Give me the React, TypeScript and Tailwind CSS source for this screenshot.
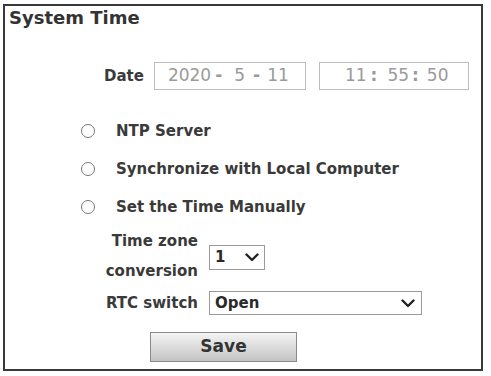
import React from 'react';

const font = { fontFamily: '"DejaVu Sans", Verdana, sans-serif' };

function Radio({ label }: { label: string }) {
  return (
    <div className="flex items-center h-[20px]">
      <span className="w-[14px] h-[14px] rounded-full border border-[#777] bg-white" />
      <span className="ml-[21px] text-[15px] font-bold text-[#3a3a3a]">{label}</span>
    </div>
  );
}

function Chevron({ w = 14 }: { w?: number }) {
  return (
    <svg width={w} height="9" viewBox="0 0 14 9" fill="none">
      <path d="M1.5 1.5 L7 7 L12.5 1.5" stroke="#222" strokeWidth="2.4" strokeLinecap="round" strokeLinejoin="round" />
    </svg>
  );
}

export default function App() {
  return (
    <div className="w-[491px] h-[376px] bg-white pt-[4px] pl-[3px]" style={font}>
      <div className="w-[480px] h-[367px] border-2 border-[#3a3a3a] relative">
        <div className="pl-[4px] pt-[1px] text-[18px] font-bold text-[#333] leading-[22px]">System Time</div>

        <div className="flex items-center mt-[33px] h-[28px]">
          <span className="ml-[99px] text-[15px] font-bold text-[#3a3a3a]">Date</span>
          <div className="ml-[10px] w-[152px] h-[28px] border border-[#bdbdbd] flex items-center pl-[13px] text-[17px] text-[#9a9a9a]">
            <span>2020</span>
            <span className="ml-[4px] font-bold">-</span>
            <span className="ml-[12px]">5</span>
            <span className="ml-[8px] font-bold">-</span>
            <span className="ml-[7px]">11</span>
          </div>
          <div className="ml-[13px] w-[150px] h-[28px] border border-[#bdbdbd] flex items-center pl-[25px] text-[17px] text-[#9a9a9a]">
            <span>11</span>
            <span className="ml-[4px] font-bold">:</span>
            <span className="ml-[10px]">55</span>
            <span className="ml-[3px] font-bold">:</span>
            <span className="ml-[8px]">50</span>
          </div>
        </div>

        <div className="ml-[76px] mt-[31px] flex flex-col gap-[18px]">
          <Radio label="NTP Server" />
          <Radio label="Synchronize with Local Computer" />
          <Radio label="Set the Time Manually" />
        </div>

        <div className="flex items-start mt-[9px]">
          <div className="w-[193px] text-right text-[15px] font-bold leading-[30px] text-[#3a3a3a]">
            <div>Time zone</div>
            <div>conversion</div>
          </div>
          <div className="ml-[11px] mt-[19px] w-[56px] h-[25px] border border-[#9a9a9a] flex items-center justify-between px-[5px] text-[15px] font-bold text-[#2a2a2a]">
            <span>1</span>
            <Chevron />
          </div>
        </div>

        <div className="flex items-center mt-[5px]">
          <div className="w-[193px] text-right text-[15px] font-bold text-[#3a3a3a]">RTC switch</div>
          <div className="ml-[11px] w-[213px] h-[24px] border border-[#9a9a9a] flex items-center justify-between pl-[5px] pr-[6px] text-[15px] font-bold text-[#2a2a2a]">
            <span>Open</span>
            <Chevron />
          </div>
        </div>

        <div className="mt-[17px] ml-[145px] w-[147px] h-[30px] border border-[#8a8a8a] bg-gradient-to-b from-[#f4f4f4] to-[#c4c4c4] flex items-center justify-center text-[17px] font-bold text-[#333]">
          Save
        </div>
      </div>
    </div>
  );
}
